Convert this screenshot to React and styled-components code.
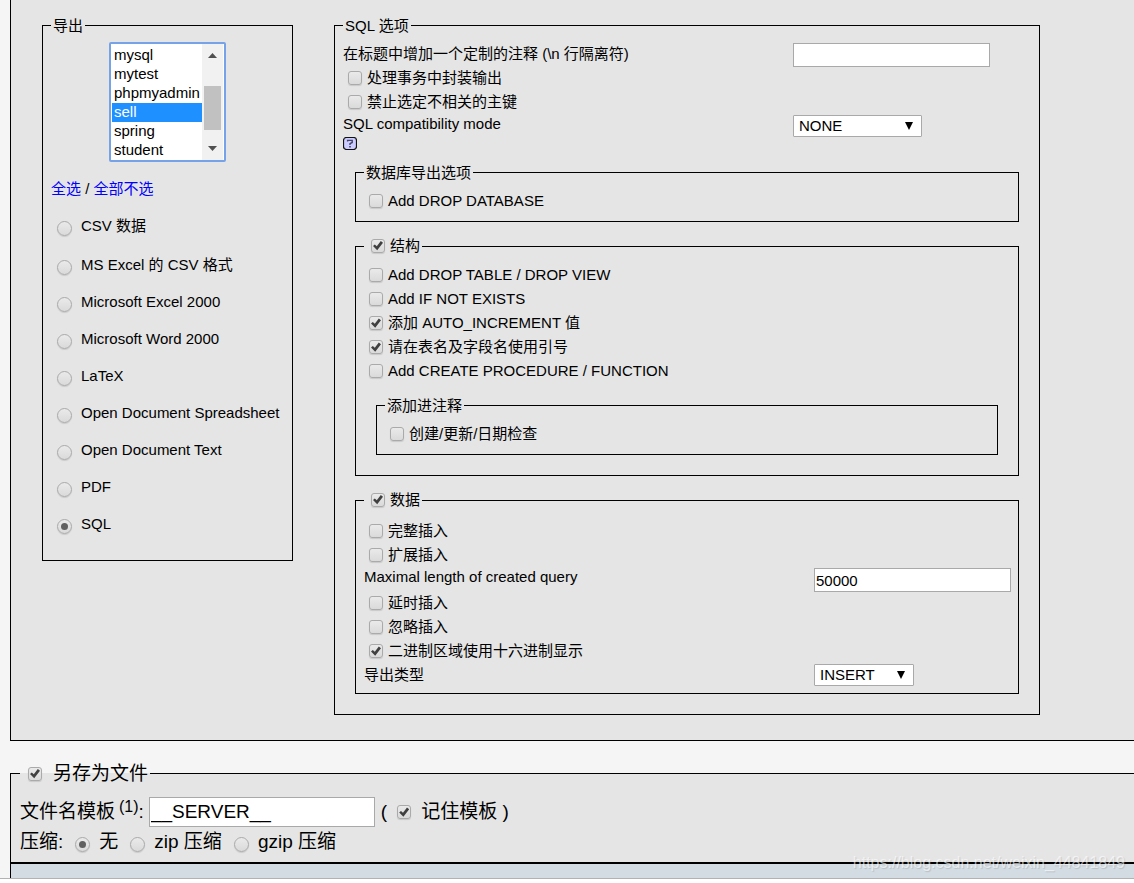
import React from "react";
import styled, { createGlobalStyle, css } from "styled-components";

const GlobalStyle = createGlobalStyle`
  *, *::before, *::after { box-sizing: border-box; }
  body {
    margin: 0;
    background: #fff;
    color: #000;
    font: 15px/20px "Liberation Sans", Arial, "Noto Sans CJK SC", sans-serif;
    overflow-x: hidden;
  }
  input, select, button { font: inherit; color: inherit; margin: 0; }
`;

const Page = styled.main`
  position: relative;
  background: #f5f5f5;
  border-bottom: 1px solid #b2b2b2;
`;

const Panel = styled.section`
  display: flex;
  align-items: flex-start;
  gap: 41px;
  margin-left: 10px;
  padding: 15px 94px 25px 31px;
  background: #e5e5e5;
  border: solid #000;
  border-width: 0 0 1px 1px;
`;

const Group = styled.fieldset`
  min-width: 0;
  margin: 0;
  padding: 6px 8px 8px;
  border: 1px solid #000;
`;

const FormatGroup = styled(Group)`
  flex: none;
  width: 251px;
  padding-bottom: 9px;
`;

const SqlGroup = styled(Group)`
  flex: 1;
`;

const SubGroup = styled(Group)`
  margin: ${(p) => p.$top || 14}px 12px 0;
  ${(p) => p.$last && css`margin-bottom: 12px;`}
  ${(p) => p.$roomy && css`padding: 8px 8px 6px;`}
`;

const Legend = styled.legend`
  padding: 0 2px;
  line-height: 21px;
`;

const ToggleLegend = styled(Legend)`
  padding: 0 2px 2px 7px;
  line-height: 19px;
`;

const OptionLabel = styled.label`
  display: inline-flex;
  align-items: center;
  gap: 5px;
  vertical-align: top;
`;

const Checkbox = styled.input.attrs({ type: "checkbox" })`
  appearance: none;
  flex: none;
  display: grid;
  place-items: center;
  width: 14px;
  height: 14px;
  border: 1px solid #aaa;
  border-radius: 3px;
  background: linear-gradient(#eaeaea, #dadada);
  box-shadow: 0 1px 1px rgba(0, 0, 0, 0.12);
  &:checked::after {
    content: "";
    width: 10px;
    height: 10px;
    background: #404040;
    clip-path: polygon(0% 56%, 18% 40%, 38% 58%, 78% 4%, 100% 22%, 42% 98%);
  }
`;

const Radio = styled.input.attrs({ type: "radio" })`
  appearance: none;
  flex: none;
  display: grid;
  place-items: center;
  width: 15px;
  height: 15px;
  border: 1px solid #aaa;
  border-radius: 50%;
  background: linear-gradient(#eaeaea, #dadada);
  box-shadow: 0 1px 1px rgba(0, 0, 0, 0.12);
  &:checked::after {
    content: "";
    width: 7px;
    height: 7px;
    border-radius: 50%;
    background: #606060;
  }
`;

const CheckRow = styled.div`
  display: flex;
  align-items: center;
  height: 24px;
  padding-left: 5px;
`;

const FieldRow = styled.div`
  display: grid;
  grid-template-columns: 450px 1fr;
  align-items: start;
  height: ${(p) => (p.$auto ? "auto" : "24px")};
`;

const FieldLabel = styled.label`
  line-height: ${(p) => (p.$tall ? 24 : 20)}px;
`;

const TextInput = styled.input.attrs({ type: "text" })`
  width: 197px;
  height: 24px;
  margin-top: 1px;
  padding: 0 1px;
  border: 1px solid #a9a9a9;
  background: #fff;
`;

const SelectWrap = styled.div`
  position: relative;
  width: ${(p) => p.$width}px;
  margin-top: 1px;
`;

const Select = styled.select`
  appearance: none;
  display: block;
  width: 100%;
  height: 22px;
  padding: 0 20px 0 5px;
  border: 1px solid #a9a9a9;
  border-radius: 1px;
  background: #fff;
`;

const SelectArrow = styled.svg`
  position: absolute;
  top: 7px;
  right: 9px;
  pointer-events: none;
`;

const HelpLink = styled.a`
  display: block;
  width: 14px;
  height: 19px;
  padding-top: 1px;
`;

const DatabaseList = styled.div`
  display: flex;
  width: 117px;
  height: 120px;
  margin: 0 auto;
  border: 2px solid #76a3e8;
  border-radius: 2px;
  background: #fff;
`;

const DatabaseSelect = styled.select`
  flex: 1;
  min-width: 0;
  height: 100%;
  padding: 2px 0 0 1px;
  border: 0;
  outline: 0;
  background: #fff;
  overflow: hidden;
  scrollbar-width: none;
  option {
    height: 19px;
    min-height: 19px;
    padding: 0 2px;
    line-height: 19px;
    overflow: hidden;
  }
  option:checked {
    background: linear-gradient(#1e90ff, #1e90ff);
    -webkit-text-fill-color: #fff;
  }
`;

const ScrollTrack = styled.div`
  display: flex;
  flex-direction: column;
  align-items: center;
  width: 21px;
  margin-right: 1px;
  padding: 9px 0;
  background: #f1f1f1;
`;

const ScrollThumb = styled.div`
  width: 17px;
  height: 44px;
  margin: 28px 0 auto;
  background: #c1c1c1;
`;

const SelectLinks = styled.p`
  margin: 17px 0;
  line-height: 20px;
  a { color: #00f; text-decoration: none; }
`;

const FormatRow = styled.div`
  display: flex;
  align-items: flex-start;
  height: ${(p) => (p.$tall ? 39 : 37)}px;
  padding-left: 6px;
`;

const FormatLabel = styled.label`
  display: flex;
  gap: 9px;
  line-height: 20px;
  white-space: nowrap;
  ${Radio} { margin-top: 5px; }
`;

const SaveGroup = styled(Group)`
  margin: 19px 0 0 10px;
  padding: 9px 9px 6px;
  border-right: 0;
  background: #e5e5e5;
  font-size: 19px;
`;

const SaveLegend = styled.legend`
  padding: 0 2px 0 8px;
  line-height: 27px;
`;

const SaveLabel = styled(OptionLabel)`
  gap: ${(p) => p.$gap || 10}px;
`;

const SaveRow = styled.div`
  display: flex;
  align-items: center;
  height: ${(p) => (p.$tall ? 32 : 28)}px;
  line-height: 28px;
  white-space: nowrap;
`;

const FootnoteRef = styled.sup`
  margin-left: 4px;
  font-size: 16px;
  line-height: 0;
  vertical-align: 6px;
`;

const TemplateInput = styled(TextInput)`
  width: 226px;
  height: 30px;
  margin: 0 6px 0 5px;
`;

const Remember = styled.span`
  display: inline-flex;
  align-items: center;
  gap: 10px;
`;

const Compression = styled.div`
  display: flex;
  gap: 12px;
  margin-left: 12px;
  ${Radio} { margin-top: 4px; }
`;

const ActionBar = styled.footer`
  height: 15px;
  margin-left: 10px;
  border: solid #000;
  border-width: 1px 0 0 1px;
  background: #d3dce3;
`;

const Watermark = styled.div`
  position: absolute;
  right: 9px;
  bottom: 5px;
  font-size: 16px;
  line-height: 20px;
  color: rgba(255, 255, 255, 0.6);
  text-shadow: 1px 1px 1px rgba(0, 0, 0, 0.12);
`;

const DATABASES = ["mysql", "mytest", "phpmyadmin", "sell", "spring", "student"];

const FORMATS = [
  "CSV 数据",
  "MS Excel 的 CSV 格式",
  "Microsoft Excel 2000",
  "Microsoft Word 2000",
  "LaTeX",
  "Open Document Spreadsheet",
  "Open Document Text",
  "PDF",
  "SQL",
];

function CheckOption({ label, checked }) {
  return (
    <CheckRow>
      <OptionLabel>
        <Checkbox defaultChecked={checked} />
        {label}
      </OptionLabel>
    </CheckRow>
  );
}

function DropDown({ id, value, width }) {
  return (
    <SelectWrap $width={width}>
      <Select id={id} defaultValue={value}>
        <option>{value}</option>
      </Select>
      <SelectArrow width="8" height="8" viewBox="0 0 8 8" aria-hidden="true">
        <path d="M0 0h8L4 8z" fill="#000" />
      </SelectArrow>
    </SelectWrap>
  );
}

function HelpIcon() {
  return (
    <svg width="14" height="13" viewBox="0 0 14 13" aria-hidden="true">
      <rect x="0.5" y="0.5" width="13" height="12" rx="3" fill="#ccccff" stroke="#111" strokeWidth="1.2" />
      <path d="M4.6 4.6V3.4h4.6v2.1L7 6.6v1.5" fill="none" stroke="#444466" strokeWidth="1.4" />
      <path d="M6.2 9.1h1.6v1.5H6.2z" fill="#444466" />
    </svg>
  );
}

function ScrollArrow({ down }) {
  return (
    <svg width="9" height="5" viewBox="0 0 9 5" aria-hidden="true">
      <path d={down ? "M0 0h9L4.500 5z" : "M0 5h9L4.500 0z"} fill="#505050" />
    </svg>
  );
}

export default function App() {
  return (
    <>
      <GlobalStyle />
      <Page>
        <Panel>
          <FormatGroup>
            <Legend>导出</Legend>
            <DatabaseList>
              <DatabaseSelect multiple size={6} defaultValue={["sell"]} aria-label="导出">
                {DATABASES.map((name) => (
                  <option key={name}>{name}</option>
                ))}
              </DatabaseSelect>
              <ScrollTrack>
                <ScrollArrow />
                <ScrollThumb />
                <ScrollArrow down />
              </ScrollTrack>
            </DatabaseList>
            <SelectLinks>
              <a href="#all">全选</a> / <a href="#none">全部不选</a>
            </SelectLinks>
            {FORMATS.map((name, i) => (
              <FormatRow key={name} $tall={i === 0}>
                <FormatLabel>
                  <Radio name="format" defaultChecked={name === "SQL"} />
                  {name}
                </FormatLabel>
              </FormatRow>
            ))}
          </FormatGroup>

          <SqlGroup>
            <Legend>SQL 选项</Legend>
            <FieldRow>
              <FieldLabel htmlFor="comment" $tall>在标题中增加一个定制的注释 (\n 行隔离符)</FieldLabel>
              <TextInput id="comment" />
            </FieldRow>
            <CheckOption label="处理事务中封装输出" />
            <CheckOption label="禁止选定不相关的主键" />
            <FieldRow $auto>
              <div>
                <FieldLabel htmlFor="compat">SQL compatibility mode</FieldLabel>
                <HelpLink href="#help" aria-label="?">
                  <HelpIcon />
                </HelpLink>
              </div>
              <DropDown id="compat" value="NONE" width={129} />
            </FieldRow>

            <SubGroup $top={9}>
              <Legend>数据库导出选项</Legend>
              <CheckOption label="Add DROP DATABASE" />
            </SubGroup>

            <SubGroup>
              <ToggleLegend>
                <OptionLabel>
                  <Checkbox defaultChecked />
                  结构
                </OptionLabel>
              </ToggleLegend>
              <CheckOption label="Add DROP TABLE / DROP VIEW" />
              <CheckOption label="Add IF NOT EXISTS" />
              <CheckOption label="添加 AUTO_INCREMENT 值" checked />
              <CheckOption label="请在表名及字段名使用引号" checked />
              <CheckOption label="Add CREATE PROCEDURE / FUNCTION" />
              <SubGroup $last $top={12}>
                <Legend>添加进注释</Legend>
                <CheckOption label="创建/更新/日期检查" />
              </SubGroup>
            </SubGroup>

            <SubGroup $roomy $last>
              <ToggleLegend>
                <OptionLabel>
                  <Checkbox defaultChecked />
                  数据
                </OptionLabel>
              </ToggleLegend>
              <CheckOption label="完整插入" />
              <CheckOption label="扩展插入" />
              <FieldRow>
                <FieldLabel htmlFor="maxlen">Maximal length of created query</FieldLabel>
                <TextInput id="maxlen" defaultValue="50000" />
              </FieldRow>
              <CheckOption label="延时插入" />
              <CheckOption label="忽略插入" />
              <CheckOption label="二进制区域使用十六进制显示" checked />
              <FieldRow>
                <FieldLabel htmlFor="type" $tall>导出类型</FieldLabel>
                <DropDown id="type" value="INSERT" width={100} />
              </FieldRow>
            </SubGroup>
          </SqlGroup>
        </Panel>

        <SaveGroup>
          <SaveLegend>
            <SaveLabel $gap={11}>
              <Checkbox defaultChecked />
              另存为文件
            </SaveLabel>
          </SaveLegend>
          <SaveRow $tall>
            <label htmlFor="template">
              文件名模板<FootnoteRef>(1)</FootnoteRef>:
            </label>
            <TemplateInput id="template" defaultValue="__SERVER__" />
            <Remember>
              (
              <SaveLabel>
                <Checkbox defaultChecked />
                记住模板 )
              </SaveLabel>
            </Remember>
          </SaveRow>
          <SaveRow>
            压缩:
            <Compression>
              <SaveLabel $gap={9}>
                <Radio name="compression" defaultChecked />无
              </SaveLabel>
              <SaveLabel $gap={9}>
                <Radio name="compression" />zip 压缩
              </SaveLabel>
              <SaveLabel $gap={9}>
                <Radio name="compression" />gzip 压缩
              </SaveLabel>
            </Compression>
          </SaveRow>
        </SaveGroup>
        <ActionBar />
        <Watermark>https://blog.csdn.net/weixin_44841849</Watermark>
      </Page>
    </>
  );
}
